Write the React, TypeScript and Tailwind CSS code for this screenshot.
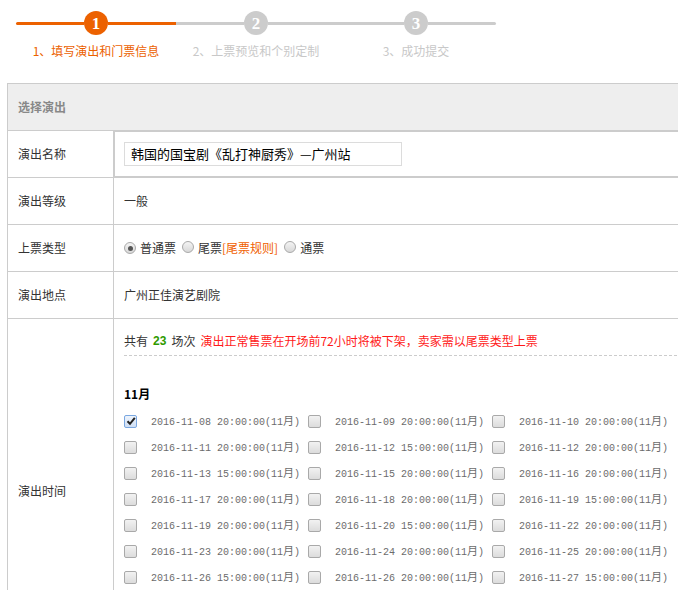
import React from "react";

const steps = [
  { n: 1, label: "1、填写演出和门票信息", active: true },
  { n: 2, label: "2、上票预览和个别定制", active: false },
  { n: 3, label: "3、成功提交", active: false },
];

const sessions: string[] = [
  "2016-11-08 20:00:00", "2016-11-09 20:00:00", "2016-11-10 20:00:00",
  "2016-11-11 20:00:00", "2016-11-12 15:00:00", "2016-11-12 20:00:00",
  "2016-11-13 15:00:00", "2016-11-15 20:00:00", "2016-11-16 20:00:00",
  "2016-11-17 20:00:00", "2016-11-18 20:00:00", "2016-11-19 15:00:00",
  "2016-11-19 20:00:00", "2016-11-20 15:00:00", "2016-11-22 20:00:00",
  "2016-11-23 20:00:00", "2016-11-24 20:00:00", "2016-11-25 20:00:00",
  "2016-11-26 15:00:00", "2016-11-26 20:00:00", "2016-11-27 15:00:00",
  "2016-11-27 20:00:00", "2016-11-30 20:00:00",
];

const cjk = "font-['Noto_Sans_CJK_SC','Microsoft_YaHei',sans-serif]";

function Radio({ checked }: { checked?: boolean }) {
  return (
    <span className="inline-flex w-[12px] h-[12px] rounded-full border border-[#a9a9a9] bg-gradient-to-b from-[#f4f4f4] to-[#d8d8d8] items-center justify-center">
      {checked && <span className="w-[5px] h-[5px] rounded-full bg-[#555]" />}
    </span>
  );
}

function Checkbox({ checked }: { checked?: boolean }) {
  return (
    <span
      className={
        checked
          ? "inline-flex w-[13px] h-[13px] rounded-[2px] border border-[#7aa7e0] bg-gradient-to-b from-[#eef4fc] to-[#cfdff5] items-center justify-center"
          : "inline-flex w-[13px] h-[13px] rounded-[2px] border border-[#a9a9a9] bg-gradient-to-b from-[#f2f2f2] to-[#dcdcdc]"
      }
    >
      {checked && (
        <svg width="10" height="10" viewBox="0 0 10 10">
          <path d="M1.5 5.2 L4 7.8 L8.8 1.8" fill="none" stroke="#222" strokeWidth="2" />
        </svg>
      )}
    </span>
  );
}

function Row({ label, children, last }: { label: string; children: React.ReactNode; last?: boolean }) {
  return (
    <div className="flex border-b border-[#ccc]">
      <div className="w-[106px] shrink-0 border-r border-[#ccc] pl-[10px] flex items-center text-[12px] text-[#333]">
        {label}
      </div>
      {children}
    </div>
  );
}

export default function App() {
  const rows: string[][] = [];
  for (let i = 0; i < sessions.length; i += 3) rows.push(sessions.slice(i, i + 3));

  return (
    <div className={`w-[678px] h-[590px] overflow-hidden bg-white ${cjk}`}>
      {/* step bar */}
      <div className="flex pl-[16px] pt-[11px]">
        {steps.map((s, i) => {
          const color = s.active ? "bg-[#ec6100]" : "bg-[#cccccc]";
          return (
            <div key={s.n} className="w-[160px] flex flex-col items-center">
              <div className="w-full flex items-center h-[24px]">
                <div className={`flex-1 h-[3px] ${color} ${i === 0 ? "rounded-l-full" : ""}`} />
                <div
                  className={`w-[24px] h-[24px] rounded-full ${color} flex items-center justify-center text-white text-[17px] font-bold leading-none font-['Liberation_Serif',serif]`}
                >
                  {s.n}
                </div>
                <div className={`flex-1 h-[3px] ${color} ${i === steps.length - 1 ? "rounded-r-full" : ""}`} />
              </div>
              <div
                className={`mt-[8px] text-[12px] leading-[16px] ${s.active ? "text-[#ec6100]" : "text-[#c8c8c8]"}`}
              >
                {s.label}
              </div>
            </div>
          );
        })}
      </div>

      {/* form table */}
      <div className="ml-[7px] mt-[24px] w-[720px] border-l border-t border-[#ccc]">
        <div className="h-[47px] bg-[#eeeeee] border-b border-[#ccc] pl-[10px] flex items-center text-[12px] font-bold text-[#888]">
          选择演出
        </div>

        <Row label="演出名称">
          <div className="flex-1 h-[46px] pl-[10px] flex items-center shadow-[inset_1px_1px_0_#ccc,inset_0_-1px_0_#ccc]">
            <div className="w-[278px] h-[24px] border border-[#dcdcdc] pl-[6px] flex items-center text-[13px] text-black">
              韩国的国宝剧《乱打神厨秀》—广州站
            </div>
          </div>
        </Row>

        <Row label="演出等级">
          <div className="flex-1 h-[46px] pl-[10px] flex items-center text-[12px] text-[#333]">一般</div>
        </Row>

        <Row label="上票类型">
          <div className="flex-1 h-[46px] pl-[10px] flex items-center text-[12px] text-[#333]">
            <Radio checked />
            <span className="ml-[4px]">普通票</span>
            <span className="ml-[6px]"><Radio /></span>
            <span className="ml-[4px]">尾票</span>
            <span className="text-[#f06000]">[尾票规则]</span>
            <span className="ml-[6px]"><Radio /></span>
            <span className="ml-[4px]">通票</span>
          </div>
        </Row>

        <Row label="演出地点">
          <div className="flex-1 h-[46px] pl-[10px] flex items-center text-[12px] text-[#333]">广州正佳演艺剧院</div>
        </Row>

        <Row label="演出时间" last>
          <div className="flex-1 pl-[10px] pt-[14px] pb-[47px]">
            <div className="text-[12px] leading-[16px] text-[#333] flex items-center">
              <span>共有</span>
              <span className="mx-[5px] font-bold text-[#2f9a00] font-['Liberation_Sans',sans-serif]">23</span>
              <span>场次</span>
              <span className="ml-[5px] text-[#ff1a1a]">演出正常售票在开场前72小时将被下架，卖家需以尾票类型上票</span>
            </div>
            <div className="mt-[6px] border-b border-dashed border-[#cccccc]" />
            <div className="mt-[30px] text-[12px] leading-[16px] font-bold text-black">11月</div>
            <div className="mt-[6px]">
              {rows.map((r, ri) => (
                <div key={ri} className="flex h-[26px] items-center">
                  {r.map((d, ci) => (
                    <div key={d + ci} className="w-[184px] shrink-0 flex items-center">
                      <Checkbox checked={ri === 0 && ci === 0} />
                      <span className="ml-[14px] text-[10px] text-[#6c6c6c] font-['Liberation_Mono','Noto_Sans_CJK_SC',monospace] whitespace-nowrap">
                        {d}(11<span className={`${cjk} text-[11px]`}>月</span>)
                      </span>
                    </div>
                  ))}
                </div>
              ))}
            </div>
          </div>
        </Row>
      </div>
    </div>
  );
}
